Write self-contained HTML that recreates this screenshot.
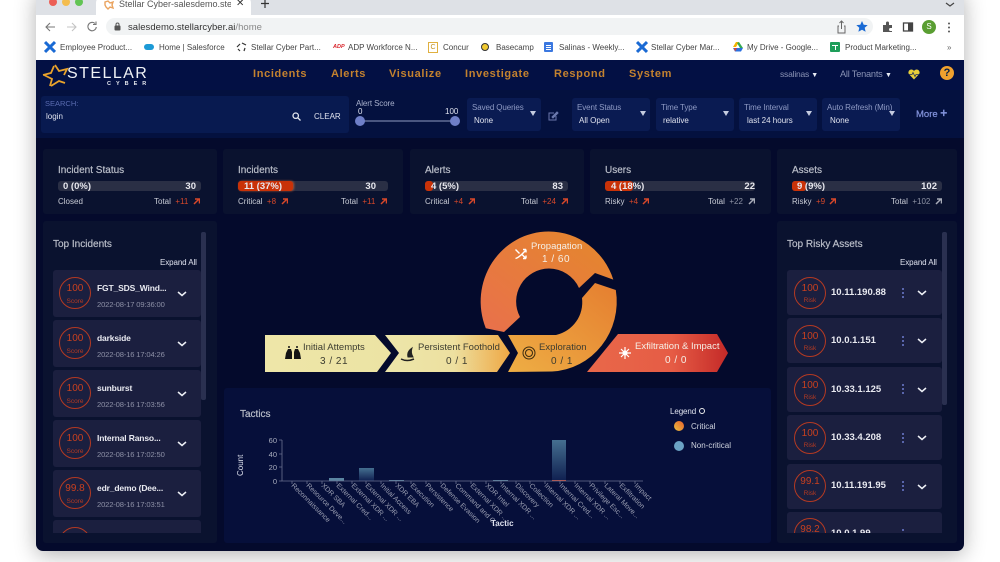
<!DOCTYPE html>
<html><head><meta charset="utf-8"><style>
html,body{margin:0;padding:0;background:#fff}
body{width:1000px;height:562px;overflow:hidden;position:relative;font-family:"Liberation Sans",sans-serif}
.a,.t{position:absolute}
.t{white-space:nowrap;line-height:12px}
#win{position:absolute;left:36px;top:-10px;width:928px;height:561px;border-radius:7px;box-shadow:0 4px 22px rgba(0,0,0,.3)}
.bm{font-size:8px;color:#444;top:42px}
.nav{font-size:11px;font-weight:bold;letter-spacing:.65px;color:#c4822f;top:68px}
.dd{position:absolute;top:98px;height:33px;background:#0a1b52;border-radius:3px}
.ddl{font-size:8px;color:#8e9ac4;top:102px;letter-spacing:-.1px}
.ddv{font-size:8px;color:#dfe2ee;top:115px}
.tri{position:absolute;width:0;height:0;border-left:3px solid transparent;border-right:3px solid transparent;border-top:5px solid #c5cce0}
.card{position:absolute;top:149px;height:65px;background:#0a122f;border-radius:3px}
.ct{font-size:10px;color:#b9bdc8;top:165px;-webkit-text-stroke:.2px #b9bdc8}
.bar{position:absolute;top:181px;height:10px;background:#2a2f45;border-radius:3px}
.fill{position:absolute;top:181px;height:10px;background:#c93208;border-radius:3px}
.bt{font-size:9.5px;font-weight:bold;color:#e8e8ee;top:181px}
.sm{font-size:8px;color:#c9ccd6;top:196px}
.r{color:#d8482a}
.g{color:#8f94a5}
.panel{position:absolute;background:#0a122f;border-radius:3px}
.item{position:absolute;background:#1b1f3f;border-radius:3px}
.nm{font-size:8.5px;font-weight:bold;color:#e8e9f0;letter-spacing:-.15px}
.dt{font-size:7.6px;color:#8d90a6;letter-spacing:-.15px}
.circ{position:absolute;width:30px;height:30px;border:1.2px solid #b53a22;border-radius:50%}
.sc{font-size:10px;color:#c9401f;text-align:center;width:32px}
.sl{font-size:6.5px;color:#b53a22;text-align:center;width:32px}
.ip{font-size:9.5px;font-weight:bold;color:#e8e9f0}
.f{font-size:9.5px;color:#3c3c30}
.fw{font-size:9.5px;color:#f5efe6}
</style></head><body>
<div id="win"></div>
<!-- browser chrome -->
<div class="a" style="left:36px;top:0;width:928px;height:15px;background:#dee1e6"></div>
<div class="a" style="left:36px;top:15px;width:928px;height:21px;background:#fff"></div>
<div class="a" style="left:36px;top:36px;width:928px;height:24px;background:#fff"></div>
<div class="a" style="left:49px;top:-2px;width:8px;height:8px;border-radius:50%;background:#ec5f56"></div>
<div class="a" style="left:62px;top:-2px;width:8px;height:8px;border-radius:50%;background:#f4bd4f"></div>
<div class="a" style="left:75px;top:-2px;width:8px;height:8px;border-radius:50%;background:#62c454"></div>
<div class="a" style="left:96px;top:-4px;width:155px;height:19px;background:#fff;border-radius:7px 7px 0 0"></div>
<svg class="a" style="left:103px;top:0" width="12" height="10" viewBox="0 0 12 10"><path d="M2 2l3-1 2 2 3-1-1 3 1 3-3-1-2 2-2-2-1-2z" fill="none" stroke="#eaa35f" stroke-width="1.4"/></svg>
<div class="t" style="left:119px;top:-2px;font-size:9px;color:#555;width:112px;overflow:hidden">Stellar Cyber-salesdemo.stella</div>
<div class="t" style="left:236px;top:-2px;font-size:10px;color:#333">✕</div>
<svg class="a" style="left:260px;top:-1px" width="10" height="10"><path d="M5 0v9M1 4.500h8" stroke="#333" stroke-width="1.2"/></svg>
<svg class="a" style="left:945px;top:2px" width="10" height="6"><path d="M1 1l4 3 4-3" fill="none" stroke="#444" stroke-width="1.2"/></svg>

<svg class="a" style="left:44px;top:20px" width="60" height="14" fill="none" stroke="#777" stroke-width="1.100"><path d="M11 7H2M6 3L2 7l4 4"/><path d="M23 7h9M28 3l4 4-4 4" stroke="#c4c4c4"/><path d="M51 3.500a4.200 4.200 0 1 0 1.300 3.500M52 1.500v3h-3"/></svg>
<div class="a" style="left:106px;top:18px;width:767px;height:17px;background:#f1f3f4;border-radius:9px"></div>
<svg class="a" style="left:114px;top:22px" width="7" height="9"><rect x="0.500" y="3.500" width="6" height="5" rx="1" fill="#555"/><path d="M2 4V2.500a1.500 1.500 0 0 1 3 0V4" fill="none" stroke="#555"/></svg>
<div class="t" style="left:128px;top:22px;font-size:9.500px;color:#333;letter-spacing:.03px">salesdemo.stellarcyber.ai<span style="color:#888">/home</span></div>
<svg class="a" style="left:836px;top:20px" width="36" height="14"><path d="M3 6H2v7h7V6H8M5.500 9V1M3.500 3l2-2 2 2" fill="none" stroke="#666"/><path d="M26 1l1.700 3.700 4 .4-3 2.700.9 4-3.600-2.100-3.600 2.100.9-4-3-2.700 4-.4z" fill="#1a6ad4"/></svg>
<svg class="a" style="left:882px;top:21px" width="34" height="12"><path d="M1 4h3V2a1.500 1.500 0 0 1 3 0v2h3v3H8.500a1.500 1.500 0 0 0 0 3H10v1H1z" fill="#555"/><rect x="21.500" y="2" width="9" height="8" fill="none" stroke="#444" stroke-width="1.300"/><rect x="26" y="2" width="4.500" height="8" fill="#444"/></svg>
<div class="a" style="left:922px;top:20px;width:14px;height:14px;border-radius:50%;background:#5a9e32;color:#fff;font-size:8px;line-height:14px;text-align:center">S</div>
<svg class="a" style="left:947px;top:22px" width="4" height="11"><circle cx="2" cy="1.500" r="1" fill="#555"/><circle cx="2" cy="5.500" r="1" fill="#555"/><circle cx="2" cy="9.500" r="1" fill="#555"/></svg>

<svg class="a" style="left:44px;top:40px" width="12" height="14"><path d="M1 2l10 10M11 2L1 12" stroke="#1a6ad4" stroke-width="3"/></svg>
<div class="t bm" style="left:60px">Employee Product...</div>
<div class="a" style="left:144px;top:44px;width:10px;height:6px;border-radius:3px;background:#1c9ad6"></div>
<div class="t bm" style="left:159px">Home | Salesforce</div>
<svg class="a" style="left:236px;top:42px" width="11" height="10" fill="none" stroke="#333" stroke-width="1.200"><path d="M1 5l3-3M6 1l4 2M9 6l-1 3M4 9L2 7"/></svg>
<div class="t bm" style="left:251px">Stellar Cyber Part...</div>
<div class="t" style="left:333px;top:41px;font-size:5.500px;font-weight:bold;font-style:italic;color:#d8232a">ADP</div>
<div class="t bm" style="left:348px">ADP Workforce N...</div>
<div class="a" style="left:428px;top:42px;width:8px;height:9px;border:1px solid #e0b040;color:#c09020;font-size:7px;line-height:9px;text-align:center">C</div>
<div class="t bm" style="left:443px">Concur</div>
<div class="a" style="left:481px;top:43px;width:8px;height:8px;border-radius:50%;background:#f0c930;border:1px solid #333;box-sizing:border-box"></div>
<div class="t bm" style="left:496px">Basecamp</div>
<div class="a" style="left:544px;top:42px;width:9px;height:10px;background:#3b78e0;border-radius:1px"></div>
<div class="a" style="left:546px;top:45px;width:5px;height:1px;background:#fff;box-shadow:0 2px #fff,0 4px #fff"></div>
<div class="t bm" style="left:559px">Salinas - Weekly...</div>
<svg class="a" style="left:636px;top:40px" width="12" height="14"><path d="M1 2l10 10M11 2L1 12" stroke="#1a6ad4" stroke-width="3"/></svg>
<div class="t bm" style="left:651px">Stellar Cyber Mar...</div>
<svg class="a" style="left:732px;top:42px" width="11" height="10"><path d="M4 0h3l-3 5H1z" fill="#f4b400"/><path d="M7 0l4 6H8L5 1z" fill="#34a853"/><path d="M1 6h10l-2 3.500H3z" fill="#2a70e0"/><path d="M2 6h3L3 9.500z" fill="#e04030"/></svg>
<div class="t bm" style="left:747px">My Drive - Google...</div>
<div class="a" style="left:830px;top:42px;width:10px;height:10px;background:#1e9e5a;border-radius:1px"></div>
<div class="a" style="left:832px;top:45px;width:6px;height:1px;background:#fff"></div>
<div class="a" style="left:835px;top:45px;width:1px;height:5px;background:#fff"></div>
<div class="t bm" style="left:845px">Product Marketing...</div>
<div class="t" style="left:947px;top:42px;font-size:8px;color:#666">»</div>

<!-- app -->
<div class="a" style="left:36px;top:60px;width:928px;height:491px;background:#040a2c;border-radius:0 0 7px 7px;overflow:hidden"></div>
<div class="a" style="left:36px;top:60px;width:928px;height:30px;background:#031044"></div>
<div class="a" style="left:36px;top:90px;width:928px;height:48px;background:#04113f"></div>
<svg class="a" style="left:36px;top:60px" width="40" height="30" viewBox="36 60 40 30" fill="none" stroke="#eaa32c" stroke-width="1.800"><path d="M55 65l4 6 8-2-3 6"/><path d="M43 75l8-2 3-7"/><path d="M50 86l2-7-8-4"/><path d="M65 83l-6-2-8 5"/></svg>
<div class="t" style="left:67px;top:68px;font-size:16px;color:#f0f2f6;letter-spacing:1.450px">STELLAR</div>
<div class="t" style="left:107px;top:78px;font-size:5.500px;color:#e4e6ee;letter-spacing:5px;font-weight:bold">CYBER</div>
<div class="t nav" style="left:253px">Incidents</div>
<div class="t nav" style="left:331px">Alerts</div>
<div class="t nav" style="left:389px">Visualize</div>
<div class="t nav" style="left:465px">Investigate</div>
<div class="t nav" style="left:554px">Respond</div>
<div class="t nav" style="left:629px">System</div>
<div class="t" style="left:780px;top:68px;font-size:8.500px;color:#8a93b5;letter-spacing:-.2px">ssalinas <span style="color:#e8ecf5;font-size:7px">▼</span></div>
<div class="t" style="left:840px;top:68px;font-size:9.200px;color:#8a93b5;letter-spacing:-.2px">All Tenants <span style="color:#e8ecf5;font-size:7px">▼</span></div>
<svg class="a" style="left:908px;top:69px" width="12" height="11"><path d="M6 10.500L.8 5a2.900 2.900 0 0 1 5.200-3 2.900 2.900 0 0 1 5.200 3z" fill="#e8cf3a"/><path d="M1 5.500h3l1-2 2 4 1-2h3" fill="none" stroke="#22305a" stroke-width=".8"/></svg>
<div class="a" style="left:940px;top:66px;width:14px;height:14px;border-radius:50%;background:#f0a12e;color:#052048;font-size:11px;font-weight:bold;line-height:14px;text-align:center">?</div>

<div class="a" style="left:41px;top:96px;width:308px;height:37px;background:#081a50;border-radius:3px"></div>
<div class="t" style="left:45px;top:98px;font-size:7.500px;color:#5a6bb0">SEARCH:</div>
<div class="t" style="left:46px;top:111px;font-size:8px;color:#e0e3ee">login</div>
<svg class="a" style="left:292px;top:112px" width="9" height="9" fill="none" stroke="#e5e8f0" stroke-width="1.300"><circle cx="3.700" cy="3.700" r="2.700"/><path d="M5.700 5.700L8.500 8.500"/></svg>
<div class="t" style="left:314px;top:111px;font-size:8px;color:#dfe2ee">CLEAR</div>
<div class="t" style="left:356px;top:98px;font-size:8px;color:#a8b0cc;letter-spacing:-.1px">Alert Score</div>
<div class="t" style="left:358px;top:106px;font-size:8px;color:#dfe2ee">0</div>
<div class="t" style="left:445px;top:106px;font-size:8px;color:#dfe2ee">100</div>
<div class="a" style="left:360px;top:120px;width:95px;height:2px;background:#4a5680"></div>
<div class="a" style="left:355px;top:116px;width:10px;height:10px;border-radius:50%;background:#6f7fc8"></div>
<div class="a" style="left:450px;top:116px;width:10px;height:10px;border-radius:50%;background:#6f7fc8"></div>

<div class="dd" style="left:467px;width:74px"></div>
<div class="t ddl" style="left:472px">Saved Queries</div><div class="t ddv" style="left:474px">None</div><div class="tri" style="left:530px;top:111px"></div>
<svg class="a" style="left:548px;top:111px" width="11" height="10" fill="none" stroke="#6b78ad"><path d="M8 5v4H1V2h5"/><path d="M4 6l5-5 1 1-5 5z" fill="#6b78ad"/></svg>
<div class="dd" style="left:572px;width:78px"></div>
<div class="t ddl" style="left:577px">Event Status</div><div class="t ddv" style="left:579px">All Open</div><div class="tri" style="left:640px;top:111px"></div>
<div class="dd" style="left:656px;width:78px"></div>
<div class="t ddl" style="left:661px">Time Type</div><div class="t ddv" style="left:663px">relative</div><div class="tri" style="left:723px;top:111px"></div>
<div class="dd" style="left:739px;width:78px"></div>
<div class="t ddl" style="left:744px">Time Interval</div><div class="t ddv" style="left:747px">last 24 hours</div><div class="tri" style="left:806px;top:111px"></div>
<div class="dd" style="left:822px;width:78px"></div>
<div class="t ddl" style="left:827px">Auto Refresh (Min)</div><div class="t ddv" style="left:830px">None</div><div class="tri" style="left:889px;top:111px"></div>
<div class="t" style="left:916px;top:107px;font-size:9.500px;color:#8393dc;-webkit-text-stroke:.2px #8393dc">More <b style="font-size:12px">+</b></div>

<!-- stat cards -->
<div class="card" style="left:43px;width:174px"></div>
<div class="card" style="left:223px;width:180px"></div>
<div class="card" style="left:410px;width:174px"></div>
<div class="card" style="left:590px;width:181px"></div>
<div class="card" style="left:777px;width:180px"></div>

<div class="t ct" style="left:58px">Incident Status</div>
<div class="bar" style="left:58px;width:143px"></div>
<div class="t bt" style="left:63px">0 (0%)</div><div class="t bt" style="right:804px">30</div>
<div class="t sm" style="left:58px">Closed</div>
<div class="t sm" style="left:154px">Total <span class="r">&nbsp;+11&nbsp;</span></div>
<svg class="a" style="left:193px;top:198px" width="7" height="7"><path d="M1 6l5-5M2 1h4.500v4.500" fill="none" stroke="#d8482a" stroke-width="1.500"/></svg>

<div class="t ct" style="left:238px">Incidents</div>
<div class="bar" style="left:238px;width:150px"></div><div class="fill" style="left:238px;width:55px;box-shadow:1px 0 2px #a8583a"></div>
<div class="t bt" style="left:244px">11 (37%)</div><div class="t bt" style="right:624px">30</div>
<div class="t sm" style="left:238px">Critical <span class="r">&nbsp;+8</span></div>
<svg class="a" style="left:281px;top:198px" width="7" height="7"><path d="M1 6l5-5M2 1h4.500v4.500" fill="none" stroke="#d8482a" stroke-width="1.500"/></svg>
<div class="t sm" style="left:341px">Total <span class="r">&nbsp;+11&nbsp;</span></div>
<svg class="a" style="left:380px;top:198px" width="7" height="7"><path d="M1 6l5-5M2 1h4.500v4.500" fill="none" stroke="#d8482a" stroke-width="1.500"/></svg>

<div class="t ct" style="left:425px">Alerts</div>
<div class="bar" style="left:425px;width:143px"></div><div class="fill" style="left:425px;width:8px"></div>
<div class="t bt" style="left:431px">4 (5%)</div><div class="t bt" style="right:437px">83</div>
<div class="t sm" style="left:425px">Critical <span class="r">&nbsp;+4</span></div>
<svg class="a" style="left:468px;top:198px" width="7" height="7"><path d="M1 6l5-5M2 1h4.500v4.500" fill="none" stroke="#d8482a" stroke-width="1.500"/></svg>
<div class="t sm" style="left:521px">Total <span class="r">&nbsp;+24&nbsp;</span></div>
<svg class="a" style="left:561px;top:198px" width="7" height="7"><path d="M1 6l5-5M2 1h4.500v4.500" fill="none" stroke="#d8482a" stroke-width="1.500"/></svg>

<div class="t ct" style="left:605px">Users</div>
<div class="bar" style="left:605px;width:150px"></div><div class="fill" style="left:605px;width:28px"></div>
<div class="t bt" style="left:611px">4 (18%)</div><div class="t bt" style="right:245px">22</div>
<div class="t sm" style="left:605px">Risky <span class="r">&nbsp;+4</span></div>
<svg class="a" style="left:642px;top:198px" width="7" height="7"><path d="M1 6l5-5M2 1h4.500v4.500" fill="none" stroke="#d8482a" stroke-width="1.500"/></svg>
<div class="t sm" style="left:708px">Total <span class="g">&nbsp;+22&nbsp;</span></div>
<svg class="a" style="left:748px;top:198px" width="7" height="7"><path d="M1 6l5-5M2 1h4.500v4.500" fill="none" stroke="#a8acb8" stroke-width="1.500"/></svg>

<div class="t ct" style="left:792px">Assets</div>
<div class="bar" style="left:792px;width:150px"></div><div class="fill" style="left:792px;width:14px"></div>
<div class="t bt" style="left:797px">9 (9%)</div><div class="t bt" style="right:63px">102</div>
<div class="t sm" style="left:792px">Risky <span class="r">&nbsp;+9</span></div>
<svg class="a" style="left:829px;top:198px" width="7" height="7"><path d="M1 6l5-5M2 1h4.500v4.500" fill="none" stroke="#d8482a" stroke-width="1.500"/></svg>
<div class="t sm" style="left:891px">Total <span class="g">&nbsp;+102&nbsp;</span></div>
<svg class="a" style="left:935px;top:198px" width="7" height="7"><path d="M1 6l5-5M2 1h4.500v4.500" fill="none" stroke="#a8acb8" stroke-width="1.500"/></svg>

<!-- left panel -->
<div class="panel" style="left:43px;top:221px;width:174px;height:322px"></div>
<div class="t" style="left:53px;top:239px;font-size:10px;color:#b9bdc8;-webkit-text-stroke:.2px #b9bdc8">Top Incidents</div>
<div class="t" style="left:160px;top:257px;font-size:8px;color:#dfe2ee;letter-spacing:-.1px">Expand All</div>
<div class="a" style="left:201px;top:232px;width:5px;height:168px;background:#2a3050;border-radius:2px"></div>
<div class="a" style="left:53px;top:260px;width:148px;height:273px;overflow:hidden">
 <div class="item" style="left:0;top:10px;width:148px;height:47px"></div>
 <div class="circ" style="left:6px;top:17px"></div><div class="t sc" style="left:6px;top:23px">100</div><div class="t sl" style="left:6px;top:36px">Score</div>
 <div class="t nm" style="left:44px;top:22px">FGT_SDS_Wind...</div><div class="t dt" style="left:44px;top:39px">2022-08-17 09:36:00</div>
 <div class="item" style="left:0;top:60px;width:148px;height:47px"></div>
 <div class="circ" style="left:6px;top:67px"></div><div class="t sc" style="left:6px;top:73px">100</div><div class="t sl" style="left:6px;top:86px">Score</div>
 <div class="t nm" style="left:44px;top:72px">darkside</div><div class="t dt" style="left:44px;top:89px">2022-08-16 17:04:26</div>
 <div class="item" style="left:0;top:110px;width:148px;height:47px"></div>
 <div class="circ" style="left:6px;top:117px"></div><div class="t sc" style="left:6px;top:123px">100</div><div class="t sl" style="left:6px;top:136px">Score</div>
 <div class="t nm" style="left:44px;top:122px">sunburst</div><div class="t dt" style="left:44px;top:139px">2022-08-16 17:03:56</div>
 <div class="item" style="left:0;top:160px;width:148px;height:47px"></div>
 <div class="circ" style="left:6px;top:167px"></div><div class="t sc" style="left:6px;top:173px">100</div><div class="t sl" style="left:6px;top:186px">Score</div>
 <div class="t nm" style="left:44px;top:172px">Internal Ranso...</div><div class="t dt" style="left:44px;top:189px">2022-08-16 17:02:50</div>
 <div class="item" style="left:0;top:210px;width:148px;height:47px"></div>
 <div class="circ" style="left:6px;top:217px"></div><div class="t sc" style="left:6px;top:223px">99.8</div><div class="t sl" style="left:6px;top:236px">Score</div>
 <div class="t nm" style="left:44px;top:222px">edr_demo (Dee...</div><div class="t dt" style="left:44px;top:239px">2022-08-16 17:03:51</div>
 <div class="item" style="left:0;top:260px;width:148px;height:47px"></div>
 <div class="circ" style="left:6px;top:267px"></div>
 <svg class="a" style="left:123px;top:0" width="12" height="240" fill="none" stroke="#eef0f6" stroke-width="1.500"><path d="M2 32l4 3.500 4-3.500M2 82l4 3.500 4-3.500M2 132l4 3.500 4-3.500M2 182l4 3.500 4-3.500M2 232l4 3.500 4-3.500"/></svg>
</div>

<!-- right panel -->
<div class="panel" style="left:777px;top:221px;width:180px;height:322px"></div>
<div class="t" style="left:787px;top:239px;font-size:10px;color:#b9bdc8;-webkit-text-stroke:.2px #b9bdc8">Top Risky Assets</div>
<div class="t" style="left:900px;top:257px;font-size:8px;color:#dfe2ee;letter-spacing:-.1px">Expand All</div>
<div class="a" style="left:942px;top:232px;width:5px;height:173px;background:#2a3050;border-radius:2px"></div>
<div class="a" style="left:787px;top:260px;width:155px;height:273px;overflow:hidden">
 <div class="item" style="left:0;top:10px;width:155px;height:45px"></div>
 <div class="circ" style="left:7px;top:17px"></div><div class="t sc" style="left:7px;top:23px">100</div><div class="t sl" style="left:7px;top:35px">Risk</div>
 <div class="t ip" style="left:44px;top:27px">10.11.190.88</div>
 <div class="item" style="left:0;top:58px;width:155px;height:45px"></div>
 <div class="circ" style="left:7px;top:65px"></div><div class="t sc" style="left:7px;top:71px">100</div><div class="t sl" style="left:7px;top:83px">Risk</div>
 <div class="t ip" style="left:44px;top:75px">10.0.1.151</div>
 <div class="item" style="left:0;top:107px;width:155px;height:45px"></div>
 <div class="circ" style="left:7px;top:114px"></div><div class="t sc" style="left:7px;top:120px">100</div><div class="t sl" style="left:7px;top:132px">Risk</div>
 <div class="t ip" style="left:44px;top:124px">10.33.1.125</div>
 <div class="item" style="left:0;top:155px;width:155px;height:45px"></div>
 <div class="circ" style="left:7px;top:162px"></div><div class="t sc" style="left:7px;top:168px">100</div><div class="t sl" style="left:7px;top:180px">Risk</div>
 <div class="t ip" style="left:44px;top:172px">10.33.4.208</div>
 <div class="item" style="left:0;top:204px;width:155px;height:45px"></div>
 <div class="circ" style="left:7px;top:210px"></div><div class="t sc" style="left:7px;top:216px">99.1</div><div class="t sl" style="left:7px;top:228px">Risk</div>
 <div class="t ip" style="left:44px;top:220px">10.11.191.95</div>
 <div class="item" style="left:0;top:252px;width:155px;height:45px"></div>
 <div class="circ" style="left:7px;top:258px"></div><div class="t sc" style="left:7px;top:264px">98.2</div>
 <div class="t ip" style="left:44px;top:268px">10.0.1.99</div>
 <svg class="a" style="left:114px;top:0" width="30" height="273"><g fill="#6d7cd0"><circle cx="2" cy="29" r="1"/><circle cx="2" cy="33" r="1"/><circle cx="2" cy="37" r="1"/><circle cx="2" cy="77" r="1"/><circle cx="2" cy="81" r="1"/><circle cx="2" cy="85" r="1"/><circle cx="2" cy="125" r="1"/><circle cx="2" cy="129" r="1"/><circle cx="2" cy="133" r="1"/><circle cx="2" cy="174" r="1"/><circle cx="2" cy="178" r="1"/><circle cx="2" cy="182" r="1"/><circle cx="2" cy="222" r="1"/><circle cx="2" cy="226" r="1"/><circle cx="2" cy="230" r="1"/><circle cx="2" cy="270" r="1"/></g><path d="M17 31l4 3.500 4-3.500M17 79l4 3.500 4-3.500M17 128l4 3.500 4-3.500M17 176l4 3.500 4-3.500M17 225l4 3.500 4-3.500" fill="none" stroke="#eef0f6" stroke-width="1.500"/></svg>
</div>

<!-- kill chain -->
<svg class="a" style="left:0;top:0" width="1000" height="562">
<defs>
<linearGradient id="p1" x1="0" y1="1" x2="1" y2="0"><stop offset="0" stop-color="#e9704c"/><stop offset="1" stop-color="#e4882b"/></linearGradient>
<linearGradient id="p2" x1="0" y1="1" x2="1" y2="0"><stop offset="0" stop-color="#eeae44"/><stop offset="1" stop-color="#e57e30"/></linearGradient>
<linearGradient id="c1" x1="0" y1="0" x2="1" y2="0"><stop offset="0" stop-color="#eee6a8"/><stop offset="1" stop-color="#ece3a4"/></linearGradient>
<linearGradient id="c2" x1="0" y1="0" x2="1" y2="0"><stop offset="0" stop-color="#ede6aa"/><stop offset=".55" stop-color="#ede0a0"/><stop offset="1" stop-color="#eea845"/></linearGradient>
<linearGradient id="c3" x1="0" y1="0" x2="1" y2="0"><stop offset="0" stop-color="#e8684a"/><stop offset=".6" stop-color="#e65c45"/><stop offset="1" stop-color="#c42a28"/></linearGradient>
</defs>
<path d="M485.800 328.200A68 70 0 0 1 548.700 231.500A68 70 0 0 1 613.300 279.600L595 273 579 288A33 33 0 0 0 549 268.500A33 33 0 0 0 520 317L504 332Z" fill="url(#p1)"/>
<path d="M508 372L518 353 508 335H556A33.500 33.500 0 0 0 582 298L595 283 615.800 290A68 70 0 0 1 552 371.500Z" fill="url(#p2)"/>
<path d="M265 335H375L391 353 377 372H265Z" fill="url(#c1)"/>
<path d="M385 335H498L510 353 497 372H385L399 353Z" fill="url(#c2)"/>
<path d="M587 372L618 334H717L728 353 717 372Z" fill="url(#c3)"/>
<g fill="#131313"><path d="M286 353l2-4h3l1 3v7h-7zM294 352l1-3h3l2 4 1 6h-7z"/><circle cx="289" cy="347" r="1"/><circle cx="297" cy="347" r="1"/></g>
<g fill="none" stroke="#222" stroke-width="1"><path d="M401 359q6 3 13 0" stroke-width="1.500"/><path d="M408 357c-1-4 1-7 4-9-1 3-1 6 1 9z" fill="#222"/></g>
<g fill="none" stroke="#3a2a10"><circle cx="529" cy="353" r="6"/><circle cx="529" cy="353" r="3.500"/></g>
<g stroke="#fff" stroke-width="1.400" fill="none"><path d="M515.500 249.500l4 4M526 258.500l-4-4M515.500 258.500c4-1 7-5 10-8M526 249.500h-3M526 249.500v3M526 258.500h-3M526 258.500v-3"/></g>
<g stroke="#fff" stroke-width="1.200"><path d="M625 347v12M619 353h12M621 349l8 8M629 349l-8 8"/></g><circle cx="625" cy="353" r="2.500" fill="#fff"/>
</svg>
<div class="t f" style="left:303px;top:342px">Initial Attempts</div>
<div class="t f" style="left:320px;top:356px;font-size:10px;letter-spacing:.5px">3 / 21</div>
<div class="t f" style="left:418px;top:342px">Persistent Foothold</div>
<div class="t f" style="left:446px;top:356px;font-size:10px;letter-spacing:.5px">0 / 1</div>
<div class="t f" style="left:539px;top:342px">Exploration</div>
<div class="t f" style="left:551px;top:356px;font-size:10px;letter-spacing:.5px">0 / 1</div>
<div class="t fw" style="left:531px;top:241px">Propagation</div>
<div class="t fw" style="left:542px;top:254px;font-size:10px;letter-spacing:.5px">1 / 60</div>
<div class="t fw" style="left:635px;top:341px">Exfiltration &amp; Impact</div>
<div class="t fw" style="left:665px;top:355px;font-size:10px;letter-spacing:.5px">0 / 0</div>

<!-- tactics -->
<div class="panel" style="left:224px;top:388px;width:547px;height:155px;background:#060f3a"></div>
<div class="t" style="left:240px;top:409px;font-size:10px;color:#b9bdc8;-webkit-text-stroke:.2px #b9bdc8">Tactics</div>
<div class="t" style="left:670px;top:406px;font-size:8px;color:#dfe2ee;letter-spacing:-.1px">Legend</div>
<div class="a" style="left:699px;top:408px;width:4px;height:4px;border:1.500px solid #eee;border-radius:50%"></div>
<div class="a" style="left:674px;top:421px;width:10px;height:10px;border-radius:50%;background:linear-gradient(45deg,#e8c040,#e8602c)"></div>
<div class="t" style="left:691px;top:421px;font-size:8px;color:#cfd3de">Critical</div>
<div class="a" style="left:674px;top:441px;width:10px;height:10px;border-radius:50%;background:#6ba3c4"></div>
<div class="t" style="left:691px;top:440px;font-size:8px;color:#cfd3de">Non-critical</div>
<svg class="a" style="left:0;top:0" width="1000" height="562" font-family="Liberation Sans, sans-serif">
<defs><linearGradient id="b" x1="0" y1="0" x2="0" y2="1"><stop offset="0" stop-color="#456f90"/><stop offset="1" stop-color="#0f1f50"/></linearGradient></defs>
<rect x="329" y="478" width="15" height="3" fill="#5b86a2"/>
<rect x="359" y="468" width="15" height="13" fill="url(#b)"/>
<rect x="389" y="480" width="15" height="1" fill="#5b86a2"/>
<rect x="493" y="480" width="15" height="1" fill="#5b86a2"/>
<rect x="552" y="440" width="14" height="41" fill="url(#b)"/>
<rect x="552" y="480" width="14" height="1" fill="#d0503a"/>
<path d="M282 440V481H643" fill="none" stroke="#6a7090" stroke-width=".8"/>
<g stroke="#6a7090" stroke-width=".8"><path d="M279 440h3M279 454h3M279 467h3M279 481h3"/>
<path d="M292 481v3M307 481v3M322 481v3M337 481v3M352 481v3M366 481v3M381 481v3M396 481v3M411 481v3M426 481v3M441 481v3M456 481v3M471 481v3M486 481v3M501 481v3M516 481v3M530 481v3M545 481v3M560 481v3M575 481v3M590 481v3M605 481v3M620 481v3M635 481v3"/></g>
<g font-size="7.500" fill="#a9adbd" text-anchor="end"><text x="277" y="443">60</text><text x="277" y="457">40</text><text x="277" y="470">20</text><text x="277" y="484">0</text></g>
<text x="243" y="476" font-size="8" fill="#dfe2ee" transform="rotate(-90 243 476)">Count</text>
<g font-size="7" fill="#9b9fb2">
<text transform="translate(291,486) rotate(45)">Reconnaissance</text>
<text transform="translate(306,486) rotate(45)">Resource Deve...</text>
<text transform="translate(321,486) rotate(45)">XDR SBA</text>
<text transform="translate(336,486) rotate(45)">External Cred...</text>
<text transform="translate(351,486) rotate(45)">External XDR ...</text>
<text transform="translate(365,486) rotate(45)">External XDR ...</text>
<text transform="translate(380,486) rotate(45)">Initial Access</text>
<text transform="translate(395,486) rotate(45)">XDR EBA</text>
<text transform="translate(410,486) rotate(45)">Execution</text>
<text transform="translate(425,486) rotate(45)">Persistence</text>
<text transform="translate(440,486) rotate(45)">Defense Evasion</text>
<text transform="translate(455,486) rotate(45)">Command and C...</text>
<text transform="translate(470,486) rotate(45)">External XDR ...</text>
<text transform="translate(485,486) rotate(45)">XDR Intel</text>
<text transform="translate(500,486) rotate(45)">Internal XDR ...</text>
<text transform="translate(515,486) rotate(45)">Discovery</text>
<text transform="translate(529,486) rotate(45)">Collection</text>
<text transform="translate(544,486) rotate(45)">Internal XDR ...</text>
<text transform="translate(559,486) rotate(45)">Internal Cred...</text>
<text transform="translate(574,486) rotate(45)">Internal XDR ...</text>
<text transform="translate(589,486) rotate(45)">Privilege Esc...</text>
<text transform="translate(604,486) rotate(45)">Lateral Move...</text>
<text transform="translate(619,486) rotate(45)">Exfiltration</text>
<text transform="translate(634,486) rotate(45)">Impact</text>
</g>
<text x="491" y="526" font-size="8" font-weight="bold" fill="#dfe2ee">Tactic</text>
</svg>
</body></html>
